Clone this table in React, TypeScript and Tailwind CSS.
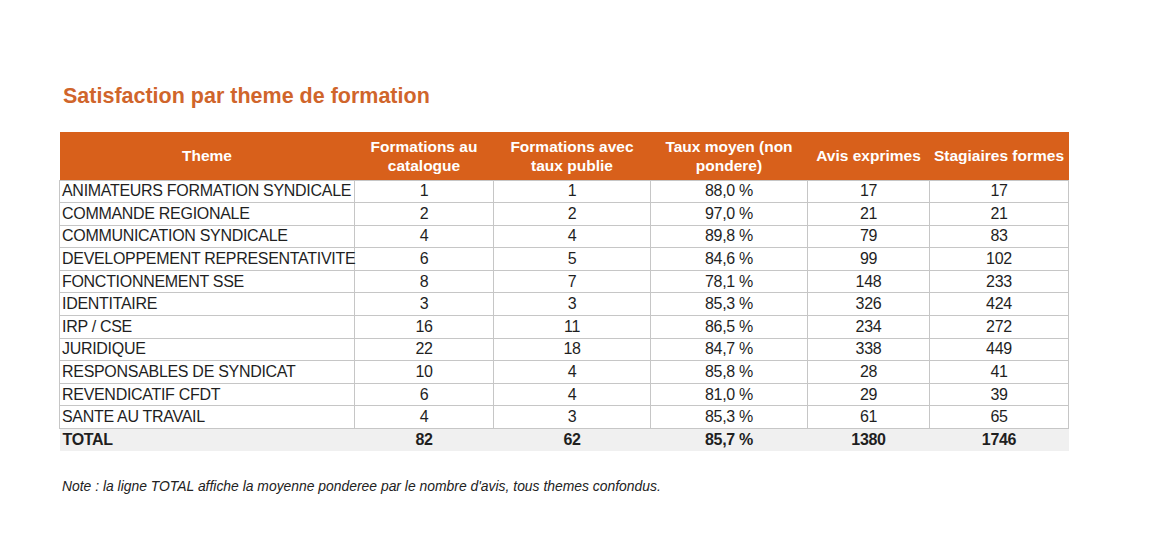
const rows: [string, number, number, string, number, number][] = [
  ["ANIMATEURS FORMATION SYNDICALE", 1, 1, "88,0 %", 17, 17],
  ["COMMANDE REGIONALE", 2, 2, "97,0 %", 21, 21],
  ["COMMUNICATION SYNDICALE", 4, 4, "89,8 %", 79, 83],
  ["DEVELOPPEMENT REPRESENTATIVITE", 6, 5, "84,6 %", 99, 102],
  ["FONCTIONNEMENT SSE", 8, 7, "78,1 %", 148, 233],
  ["IDENTITAIRE", 3, 3, "85,3 %", 326, 424],
  ["IRP / CSE", 16, 11, "86,5 %", 234, 272],
  ["JURIDIQUE", 22, 18, "84,7 %", 338, 449],
  ["RESPONSABLES DE SYNDICAT", 10, 4, "85,8 %", 28, 41],
  ["REVENDICATIF CFDT", 6, 4, "81,0 %", 29, 39],
  ["SANTE AU TRAVAIL", 4, 3, "85,3 %", 61, 65],
];

const headers = [
  "Theme",
  "Formations au catalogue",
  "Formations avec taux publie",
  "Taux moyen (non pondere)",
  "Avis exprimes",
  "Stagiaires formes",
];

export default function App() {
  return (
    <div className="min-h-[558px] w-[1160px] bg-white pl-[59px] pt-[82px] font-['Liberation_Sans',Arial,sans-serif] text-[#1f1f1f]">
      <h1 className="ml-[4px] text-[21.5px] font-bold leading-[28px] text-[#d0652b]">
        Satisfaction par theme de formation
      </h1>

      <table className="mt-[22px] w-[1009px] table-fixed border-collapse text-[16px] tracking-[-0.3px]">
        <colgroup>
          <col className="w-[295px]" />
          <col className="w-[139px]" />
          <col className="w-[157px]" />
          <col className="w-[157px]" />
          <col className="w-[122px]" />
          <col className="w-[139px]" />
        </colgroup>
        <thead>
          <tr className="h-[48px] bg-[#d8601b] tracking-normal text-white">
            {headers.map((h) => (
              <th key={h} className="px-1 text-center text-[15.5px] font-bold leading-[19px]">
                {h}
              </th>
            ))}
          </tr>
        </thead>
        <tbody>
          {rows.map((r) => (
            <tr key={r[0]} className="h-[22.6px] leading-[20px]">
              <td className="whitespace-nowrap border border-[#c6c6c6] pl-[2px] pr-0">{r[0]}</td>
              <td className="border border-[#c6c6c6] text-center">{r[1]}</td>
              <td className="border border-[#c6c6c6] text-center">{r[2]}</td>
              <td className="border border-[#c6c6c6] text-center">{r[3]}</td>
              <td className="border border-[#c6c6c6] text-center">{r[4]}</td>
              <td className="border border-[#c6c6c6] text-center">{r[5]}</td>
            </tr>
          ))}
          <tr className="h-[22px] bg-[#f0f0f0] font-bold leading-[20px]">
            <td className="pl-[3px]">TOTAL</td>
            <td className="text-center">82</td>
            <td className="text-center">62</td>
            <td className="text-center">85,7 %</td>
            <td className="text-center">1380</td>
            <td className="text-center">1746</td>
          </tr>
        </tbody>
      </table>

      <p className="ml-[3px] mt-[27px] text-[13.9px] italic leading-[16px] text-[#222]">
        Note : la ligne TOTAL affiche la moyenne ponderee par le nombre d'avis, tous themes confondus.
      </p>
    </div>
  );
}
